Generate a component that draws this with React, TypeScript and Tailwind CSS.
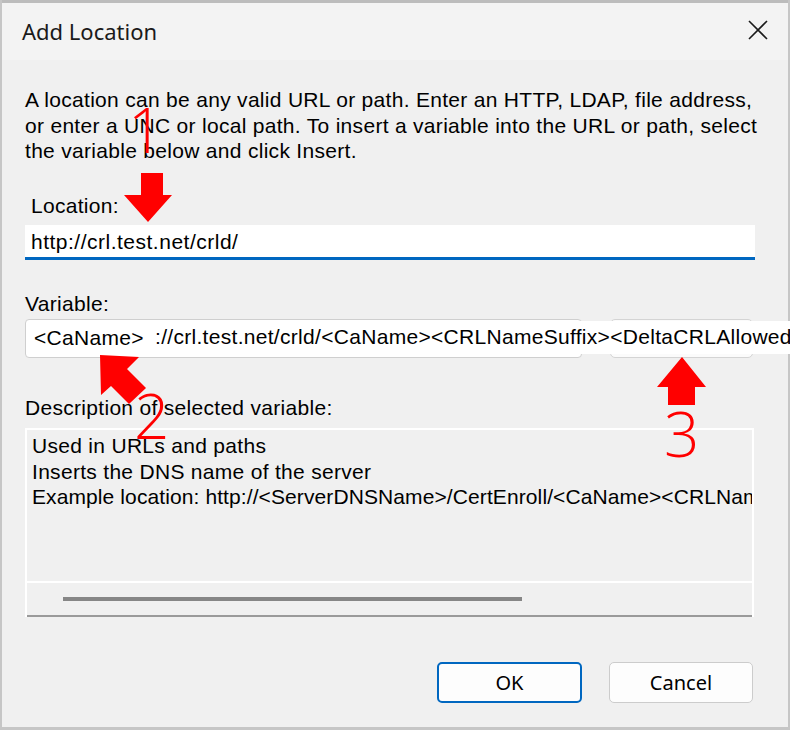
import React from 'react';

const Arrows: React.FC = () => (
  <svg className="absolute left-0 top-0 pointer-events-none" width="790" height="730" viewBox="0 0 790 730">
    {/* 1: down arrow */}
    <polygon fill="#ff0000" points="141,173 163,173 163,195 172,195 148,222 124,195 141,195" />
    {/* 2: up-left arrow */}
    <polygon fill="#ff0000" points="100,355 139,357 127,369 146,388 129,404 111,386 101,395" />
    {/* 3: up arrow */}
    <polygon fill="#ff0000" points="682,357 706,387 695,387 695,405 668,405 668,387 657,387" />
  </svg>
);

export default function App() {
  return (
    <div className="relative w-[790px] h-[730px] overflow-hidden bg-[#f0f0f0] font-['Liberation_Sans',Arial,sans-serif] text-black">
      <div className="flex flex-col h-full border-l-2 border-r-2 border-[#c6c6c6]">
        <div className="h-[3px] bg-[#bcbcbc]" />
        {/* title bar */}
        <div className="h-[57px] bg-[#f3f3f3] flex items-center justify-between pl-[20px] pr-[20px]">
          <span className="font-['Noto_Sans',sans-serif] text-[22px] text-[#1a1a1a] -mt-[1px]">Add Location</span>
          <svg width="20" height="20" viewBox="0 0 20 20" className="-mt-[3px]">
            <path d="M1 1 L19 19 M19 1 L1 19" stroke="#1a1a1a" strokeWidth="1.6" />
          </svg>
        </div>

        <div className="flex flex-col px-[23px] text-[21px] tracking-[0.3px] leading-[25.5px]">
          <p className="mt-[27px] whitespace-nowrap">
            A location can be any valid URL or path. Enter an HTTP, LDAP, file address,
            <br />
            or enter a UNC or local path. To insert a variable into the URL or path, select
            <br />
            the variable below and click Insert.
          </p>

          <div className="mt-[29px] pl-[6px]">Location:</div>
          <div className="mt-[7px] h-[35px] w-[730px] bg-white border-b-[3px] border-[#0067c0] flex items-center pl-[6px] pt-[2px] tracking-[0.5px]">
            http://crl.test.net/crld/
          </div>

          <div className="mt-[31px]">Variable:</div>
          <div className="relative mt-[2px] flex h-[39px]">
            <div className="w-[557px] h-full bg-white border border-[#cfcfcf] rounded-[4px] flex items-center pl-[8px]">
              &lt;CaName&gt;
            </div>
            <div className="ml-[28px] w-[143px] h-full bg-[#fbfbfb] border border-[#d4d4d4] rounded-[5px]" />
            <div className="absolute left-[126px] top-[2px] h-[33px] w-[650px] bg-white flex items-center pl-[4px] whitespace-nowrap overflow-hidden">
              ://crl.test.net/crld/&lt;CaName&gt;&lt;CRLNameSuffix&gt;&lt;DeltaCRLAllowed&gt;
            </div>
          </div>

          <div className="mt-[37px]">Description of selected variable:</div>
          <div className="mt-[8px] w-[729px] h-[189px] border-t-2 border-l-2 border-r-2 border-white flex flex-col">
            <div className="flex-1 pl-[5px] pt-[3px] overflow-hidden whitespace-nowrap">
              <div>Used in URLs and paths</div>
              <div>Inserts the DNS name of the server</div>
              <div className="tracking-[0.1px]">Example location: http://&lt;ServerDNSName&gt;/CertEnroll/&lt;CaName&gt;&lt;CRLNameSuffix&gt;</div>
            </div>
            <div className="h-[34px] border-t-2 border-white flex items-center pl-[36px]">
              <div className="w-[459px] h-[4px] bg-[#868686]" />
            </div>
            <div className="h-[2px] bg-[#9a9a9a]" />
          </div>

          <div className="mt-[45px] flex justify-end gap-[27px] pr-[12px] font-['Noto_Sans',sans-serif] text-[20px] tracking-normal">
            <button className="w-[145px] h-[41px] rounded-[5px] border-2 border-[#0067c0] bg-[#fdfdfd] flex items-center justify-center">
              OK
            </button>
            <button className="w-[144px] h-[41px] rounded-[5px] border border-[#cccccc] bg-[#fdfdfd] flex items-center justify-center">
              Cancel
            </button>
          </div>
        </div>
        <div className="mt-auto h-[3px] bg-[#c6c6c6]" />
      </div>

      {/* red annotation digits */}
      <span className="absolute left-[128px] top-[98px] text-[#ff0000] text-[62px] leading-none font-['Open_Sans',sans-serif] font-light">1</span>
      <span className="absolute left-[134px] top-[384px] text-[#ff0000] text-[62px] leading-none font-['Open_Sans',sans-serif] font-light">2</span>
      <span className="absolute left-[664px] top-[402px] text-[#ff0000] text-[62px] leading-none font-['Open_Sans',sans-serif] font-light">3</span>
      <Arrows />
    </div>
  );
}
